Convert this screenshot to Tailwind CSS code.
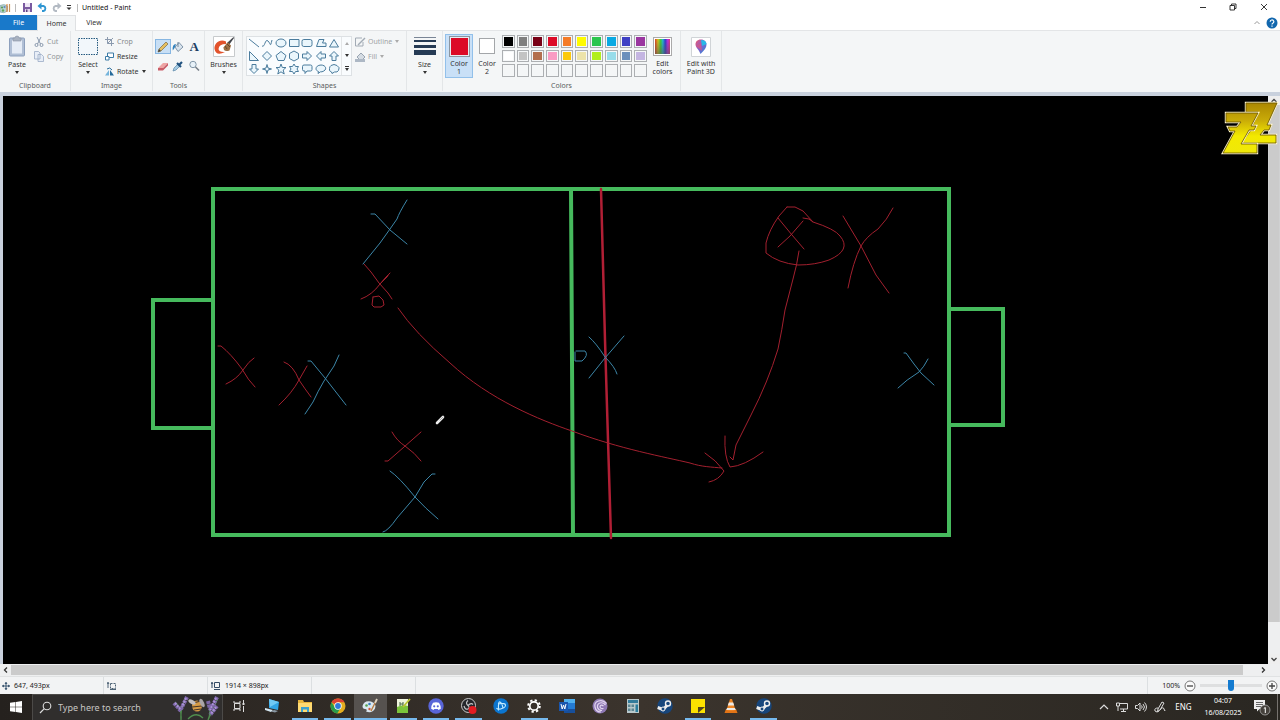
<!DOCTYPE html>
<html lang="en">
<head>
<meta charset="utf-8">
<title>Untitled - Paint</title>
<script src="https://cdn.jsdelivr.net/npm/@tailwindcss/browser@4"></script>
</head>
<body class="h-screen flex flex-col overflow-hidden bg-white text-[#333] text-[7px] leading-[10px] font-['Noto_Sans','Open_Sans',sans-serif]">

<!-- Title bar -->
<header class="h-[15px] shrink-0 flex items-center bg-white">
  <div class="flex items-center w-[82px] h-full">
    <svg class="w-3 h-3 shrink-0" viewBox="0 0 12 12"><path d="M0 3.500Q4 1.500 7.500 4v5Q4 12 0 10z" fill="#b9d3cf" stroke="#7a9ea6" stroke-width=".6"/><circle cx="2" cy="5.500" r="1.100" fill="#5a9a54"/><circle cx="4.500" cy="5" r="1.100" fill="#5d86c4"/><circle cx="3" cy="8.500" r="1.200" fill="#5fa65c"/><path d="M7 2v8" stroke="#d9772b" stroke-width="1"/><path d="M9.500 2v8" stroke="#c8955a" stroke-width="1.200"/></svg>
    <span class="ml-[3px] w-px h-2 bg-[#bbb]"></span>
    <button aria-label="Save" class="ml-[6px]"><svg class="w-[11px] h-[11px]" viewBox="0 0 11 11"><path d="M1 1h9v9H1z" fill="#7a5aa0"/><path d="M3 1h5v4H3z" fill="#eee6f5"/><path d="M3 7h5v3H3z" fill="#dfd3ea"/><path d="M4 7.500h1.500V10H4z" fill="#604583"/></svg></button>
    <button aria-label="Undo" class="ml-[4px]"><svg class="w-[11px] h-[11px]" viewBox="0 0 11 11" fill="none"><path d="M2 4h4.500a2.600 2.600 0 0 1 0 5H5" stroke="#2f96d2" stroke-width="1.900"/><path d="M.5 4l4-3.500v7z" fill="#2f96d2"/></svg></button>
    <button aria-label="Redo" class="ml-[3px]"><svg class="w-[11px] h-[11px]" viewBox="0 0 11 11" fill="none"><path d="M9 4H4.500a2.600 2.600 0 0 0 0 5H6" stroke="#b3bac3" stroke-width="1.900"/><path d="M10.500 4L6.500.5v7z" fill="#b3bac3"/></svg></button>
    <button aria-label="Customize toolbar" class="ml-[4px]"><svg class="w-[6px] h-[6px]" viewBox="0 0 6 6"><path d="M1 .5h4" stroke="#333"/><path d="M.5 2.500h5L3 5z" fill="#333"/></svg></button>
    <span class="ml-[5px] w-px h-2 bg-[#bbb]"></span>
  </div>
  <h1 class="text-[7px] text-[#111]">Untitled - Paint</h1>
  <div class="ml-auto flex h-full items-center pb-px">
    <button aria-label="Minimize" class="w-[30px] flex justify-center"><svg class="w-2 h-2" viewBox="0 0 8 8"><path d="M1 4.500h6" stroke="#333"/></svg></button>
    <button aria-label="Restore" class="w-[30px] flex justify-center"><svg class="w-2 h-2" viewBox="0 0 8 8" fill="none" stroke="#222" stroke-width=".9"><path d="M1 2.500h4.500v4.500H1zM2.500 2.500V1H7v4.500H5.500"/></svg></button>
    <button aria-label="Close" class="w-[32px] flex justify-center"><svg class="w-2 h-2" viewBox="0 0 8 8"><path d="M1 1l6 6M7 1L1 7" stroke="#222" stroke-width=".9"/></svg></button>
  </div>
</header>

<!-- Ribbon tabs -->
<nav class="h-4 shrink-0 flex items-stretch bg-white border-b border-[#e3e5e7]">
  <button class="w-[37px] bg-[#1979ca] text-white">File</button>
  <button class="w-[39px] bg-[#f4f6f7] border-x border-t border-[#dfe1e3] -mb-px">Home</button>
  <button class="w-[36px]">View</button>
  <div class="ml-auto flex items-center gap-[5px] pr-[2px]">
    <button aria-label="Collapse ribbon"><svg class="w-2 h-2" viewBox="0 0 8 8"><path d="M1.500 5L4 2.500 6.500 5" fill="none" stroke="#999"/></svg></button>
    <button aria-label="Help"><svg class="w-3 h-3" viewBox="0 0 12 12"><circle cx="6" cy="6" r="5.500" fill="#1267ae"/><path d="M4.200 4.700a1.800 1.700 0 1 1 2.600 1.500Q6 6.600 6 7.500M6 8.500v1.200" fill="none" stroke="#fff" stroke-width="1.200"/></svg></button>
  </div>
</nav>

<!-- Ribbon -->
<main class="flex-1 min-h-0 flex flex-col">
<div class="h-[61px] shrink-0 flex bg-[#f4f6f7] pb-px">
  <section class="w-[71px] flex flex-col border-r border-[#e3e6e8]">
    <div class="flex-1 flex pt-[3px]">
      <button class="w-[34px] flex flex-col items-center pt-px"><svg class="w-[18px] h-[22px]" viewBox="0 0 18 22"><rect x="1.500" y="3" width="15" height="18" rx="1" fill="#b0bfd5" stroke="#8da0bd"/><path d="M4 5h10v13.500H4z" fill="#e5ecf6"/><path d="M5 3h2q0-2 2-2t2 2h2v3H5z" fill="#a9b2c0" stroke="#8792a5" stroke-width=".6"/></svg><span class="mt-[3px]">Paste</span><svg class="w-1 h-[3px] mt-px" viewBox="0 0 4 3"><path d="M0 0h4L2 3z" fill="#333"/></svg></button>
      <div class="flex flex-col text-[#929699]">
        <button class="h-[15px] flex items-center gap-[3px]"><svg class="w-[10px] h-[10px]" viewBox="0 0 10 10" fill="none" stroke="#8998ad"><path d="M3 0l3.500 7M7 0L3.500 7"/><circle cx="2.500" cy="8" r="1.500"/><circle cx="7.500" cy="8" r="1.500"/></svg>Cut</button>
        <button class="h-[15px] flex items-center gap-[3px]"><svg class="w-[10px] h-[11px]" viewBox="0 0 10 11" fill="#e8eef7" stroke="#9aabc5" stroke-width=".8"><path d="M.5.5h4l1.500 1.500v6H.5zM4 3.500h3.500L9.500 5.500v5H4z"/></svg>Copy</button>
      </div>
    </div>
    <h2 class="text-center text-[7px] text-[#5a5d60]">Clipboard</h2>
  </section>
  <section class="w-[82px] flex flex-col border-r border-[#e3e6e8]">
    <div class="flex-1 flex pt-[3px]">
      <button class="w-[34px] flex flex-col items-center pt-px"><svg class="w-[22px] h-[22px]" viewBox="0 0 22 22"><rect x="1.500" y="3.500" width="19" height="16" fill="#f2f7fb" stroke="#23587e" stroke-dasharray="1.500 1"/></svg><span class="mt-[3px]">Select</span><svg class="w-1 h-[3px] mt-px" viewBox="0 0 4 3"><path d="M0 0h4L2 3z" fill="#333"/></svg></button>
      <div class="flex flex-col">
        <button class="h-[15px] flex items-center gap-[3px] text-[#85898c]"><svg class="w-[9px] h-[9px]" viewBox="0 0 9 9" fill="none" stroke="#8b9aae"><path d="M2.500 0v6.500H9M0 2.500h6.500V9M2.500 6.500L8 1"/></svg>Crop</button>
        <button class="h-[15px] flex items-center gap-[3px]"><svg class="w-[9px] h-[9px]" viewBox="0 0 9 9" fill="#fff" stroke="#3b7ba6"><path d="M2.500 1h6v4.500h-6z"/><path d="M.5 4.500H4v3.500H.5z"/></svg>Resize</button>
        <button class="h-[15px] flex items-center gap-[3px]"><svg class="w-[9px] h-[9px]" viewBox="0 0 9 9"><path d="M0 8.500h4V3z" fill="#74b4db"/><path d="M5 8.500h4L5 3z" fill="#256a9a"/><path d="M2 2q3-2.500 5 1" fill="none" stroke="#256a9a"/></svg>Rotate<svg class="w-1 h-[3px]" viewBox="0 0 4 3"><path d="M0 0h4L2 3z" fill="#333"/></svg></button>
      </div>
    </div>
    <h2 class="text-center text-[7px] text-[#5a5d60]">Image</h2>
  </section>
  <section class="w-[52px] flex flex-col border-r border-[#e3e6e8]">
    <div class="flex-1 grid grid-cols-3 content-start gap-y-[4px] px-[2px] pt-[8px] justify-items-center">
      <button aria-label="Pencil" class="w-4 h-[15px] flex items-center justify-center bg-[#c8dff5] border border-[#86b6e2]"><svg class="w-3 h-3" viewBox="0 0 12 12"><path d="M1 11l1-3 7-7 2 2-7 7z" fill="#e7bf5f" stroke="#7a6943" stroke-width=".7"/><path d="M1 11l1-3 2 2z" fill="#444"/></svg></button>
      <button aria-label="Fill with color" class="h-[15px] flex items-center"><svg class="w-3 h-3" viewBox="0 0 12 12"><path d="M3 6l4-4.500L11 6l-5 4.500z" fill="#d9e4ee" stroke="#647e96" stroke-width=".8"/><path d="M6 6V1" stroke="#55718b" stroke-width=".8"/><path d="M4 3Q0 3 .8 9.500q2-2 2.700-5z" fill="#3081bd"/></svg></button>
      <button aria-label="Text" class="h-[15px] text-[13px] leading-[15px] font-bold text-[#1d3e63] font-['Liberation_Serif',serif]">A</button>
      <button aria-label="Eraser" class="h-[15px] flex items-center"><svg class="w-3 h-3" viewBox="0 0 12 12"><path d="M1 8l5-5h5L6 8z" fill="#eea4a4"/><path d="M1 8h5v2.500H1zM6 8l5-5v2.500l-5 5z" fill="#c95d68"/></svg></button>
      <button aria-label="Color picker" class="h-[15px] flex items-center"><svg class="w-3 h-3" viewBox="0 0 12 12"><path d="M1 11l1-3 4-4 2 2-4 4z" fill="#a6cce4" stroke="#5a87a7" stroke-width=".7"/><path d="M5 3l4 4M7 5l3-3" stroke="#21527f" stroke-width="2.200"/></svg></button>
      <button aria-label="Magnifier" class="h-[15px] flex items-center"><svg class="w-3 h-3" viewBox="0 0 12 12"><circle cx="5" cy="4.500" r="3.200" fill="#e7f1f8" stroke="#8297a8"/><path d="M7.500 7L11 10.500" stroke="#777f88" stroke-width="1.600"/></svg></button>
    </div>
    <h2 class="text-center text-[7px] text-[#5a5d60]">Tools</h2>
  </section>
  <section class="w-[38px] flex flex-col border-r border-[#e3e6e8] pt-[5px]">
    <button class="flex flex-col items-center"><svg class="w-[22px] h-[21px]" viewBox="0 0 22 21"><path d="M.5.500h21v20H.5z" fill="#fff" stroke="#c7cacc"/><path d="M13 5.500C7 2.500 1 7 1.500 13q1.500 7.500 10.500 3-6 .5-6.500-3Q6 8 13 8z" fill="#e2532c"/><path d="M20.500 1l-6.500 6 2 2 5-7z" fill="#42464c"/><path d="M13.500 7.500l-3 4q0 5 6 3l1.500-5-3-3z" fill="#9c6e42"/><path d="M12 10l2 3M14 8l3 3" stroke="#674629"/></svg><span class="mt-[3px]">Brushes</span><svg class="w-1 h-[3px] mt-px" viewBox="0 0 4 3"><path d="M0 0h4L2 3z" fill="#333"/></svg></button>
  </section>
  <section class="w-[164px] flex flex-col border-r border-[#e3e6e8]">
    <div class="flex-1 flex pt-[3px] pl-[3px]">
      <div class="flex w-[106px] h-[40px] mt-[2px] bg-[#f9fcfe] border border-[#dde1e4]">
        <div class="w-[94px] grid grid-cols-7 grid-rows-3 place-items-center [&_svg]:w-[12px] [&_svg]:h-[12px] [&_svg]:fill-[#eaf6fc] [&_svg]:stroke-[#4b7c9d]">
          <button aria-label="Line"><svg viewBox="0 0 12 12"><path d="M1 2l10 8"/></svg></button>
          <button aria-label="Curve"><svg viewBox="0 0 12 12"><path fill="none" d="M1 9C4 11 4 1 7 4s2 7 4-1"/></svg></button>
          <button aria-label="Oval"><svg viewBox="0 0 12 12"><ellipse cx="6" cy="6" rx="5" ry="4"/></svg></button>
          <button aria-label="Rectangle"><svg viewBox="0 0 12 12"><path d="M1.500 2.500h9.500v7H1.500z"/></svg></button>
          <button aria-label="Rounded rectangle"><svg viewBox="0 0 12 12"><rect x="1" y="2.500" width="10" height="7" rx="1.800"/></svg></button>
          <button aria-label="Polygon"><svg viewBox="0 0 12 12"><path d="M1.500 9.500L4 2.500h5L7.500 6H11v3.500z"/></svg></button>
          <button aria-label="Triangle"><svg viewBox="0 0 12 12"><path d="M1.500 10L6 2.500 10.500 10z"/></svg></button>
          <button aria-label="Right triangle"><svg viewBox="0 0 12 12"><path d="M1.500 1.500v9h9z"/></svg></button>
          <button aria-label="Diamond"><svg viewBox="0 0 12 12"><path d="M6 1.500L10.500 6 6 10.500 1.500 6z"/></svg></button>
          <button aria-label="Pentagon"><svg viewBox="0 0 12 12"><path d="M6 1.500l5 4-2 5H3l-2-5z"/></svg></button>
          <button aria-label="Hexagon"><svg viewBox="0 0 12 12"><path d="M6 1l4.500 2.500v5L6 11 1.500 8.500v-5z"/></svg></button>
          <button aria-label="Right arrow"><svg viewBox="0 0 12 12"><path d="M1.500 4H6V1.500L10.500 6 6 10.500V8H1.500z"/></svg></button>
          <button aria-label="Left arrow"><svg viewBox="0 0 12 12"><path d="M10.500 4H6V1.500L1.500 6 6 10.500V8h4.500z"/></svg></button>
          <button aria-label="Up arrow"><svg viewBox="0 0 12 12"><path d="M4 10.500V6H1.500L6 1.500 10.500 6H8v4.500z"/></svg></button>
          <button aria-label="Down arrow"><svg viewBox="0 0 12 12"><path d="M4 1.500V6H1.500L6 10.500 10.500 6H8V1.500z"/></svg></button>
          <button aria-label="Four-point star"><svg viewBox="0 0 12 12"><path d="M6 1.500L7 5l3.500 1L7 7l-1 3.500L5 7 1.500 6 5 5z"/></svg></button>
          <button aria-label="Five-point star"><svg viewBox="0 0 12 12"><path d="M6 1l1.300 3.500H11L8.200 7l1 4L6 8.800 2.800 11l1-4L1 4.500h3.700z"/></svg></button>
          <button aria-label="Six-point star"><svg viewBox="0 0 12 12"><path d="M6 1l1.500 2.500h3L9 6l1.500 2.500h-3L6 11 4.500 8.500h-3L3 6 1.500 3.500h3z"/></svg></button>
          <button aria-label="Rounded callout"><svg viewBox="0 0 12 12"><path d="M3 2h6.500q1.500 0 1.500 1.500v3Q11 8 9.500 8H6l-2 2.500V8H3Q1.500 8 1.500 6.500v-3Q1.500 2 3 2z"/></svg></button>
          <button aria-label="Oval callout"><svg viewBox="0 0 12 12"><path d="M3.500 8.500C-1 7 1 2 6 2s7 5 1 6.800H5.500L3 10.500z"/></svg></button>
          <button aria-label="Cloud callout"><svg viewBox="0 0 12 12"><path d="M3 2.500q3-2 6 0 3.500 2 1.500 5-1 2-4 1.500L4 10.500 3.500 9Q.5 8 1.500 5.500q0-2 1.500-3z"/></svg></button>
        </div>
        <div class="flex-1 flex flex-col justify-around items-center border-l border-[#e3e6e8]">
          <button aria-label="Scroll up"><svg class="w-1 h-[3px]" viewBox="0 0 4 3"><path d="M0 3h4L2 0z" fill="#aaa"/></svg></button>
          <button aria-label="Scroll down"><svg class="w-1 h-[3px]" viewBox="0 0 4 3"><path d="M0 0h4L2 3z" fill="#333"/></svg></button>
          <button aria-label="More shapes"><svg class="w-1 h-[5px]" viewBox="0 0 4 5"><path d="M0 0h4v1H0zM0 2h4L2 5z" fill="#333"/></svg></button>
        </div>
      </div>
      <div class="flex flex-col pl-[3px] text-[#a0a3a6]">
        <button class="h-[15px] flex items-center gap-[2px]"><svg class="w-[11px] h-[10px]" viewBox="0 0 11 10" fill="none" stroke="#a2abb5"><path d="M7 1H.5v8H8V5"/><path d="M3 8l7-7" stroke-width="1.500"/></svg>Outline<svg class="w-1 h-[3px] ml-px" viewBox="0 0 4 3"><path d="M0 0h4L2 3z" fill="#aaa"/></svg></button>
        <button class="h-[15px] flex items-center gap-[2px]"><svg class="w-[11px] h-[10px]" viewBox="0 0 11 10"><path d="M2 5l4-4 4 4-4 4z" fill="#d5dce3" stroke="#99a5b2"/><path d="M0 7h10v3H0z" fill="#adb8c5"/></svg>Fill<svg class="w-1 h-[3px] ml-px" viewBox="0 0 4 3"><path d="M0 0h4L2 3z" fill="#aaa"/></svg></button>
      </div>
    </div>
    <h2 class="text-center text-[7px] text-[#5a5d60]">Shapes</h2>
  </section>
  <section class="w-[36px] flex flex-col border-r border-[#e3e6e8] pt-[5px]">
    <button class="flex flex-col items-center"><svg class="w-[22px] h-[21px]" viewBox="0 0 22 21" fill="#263b55"><path d="M0 1h22v1H0z" opacity=".6"/><path d="M0 4h22v2H0zM0 9h22v3H0zM0 14h22v5H0z"/></svg><span class="mt-[3px]">Size</span><svg class="w-1 h-[3px] mt-px" viewBox="0 0 4 3"><path d="M0 0h4L2 3z" fill="#333"/></svg></button>
  </section>
  <section class="w-[238px] flex flex-col border-r border-[#e3e6e8]">
    <div class="flex-1 flex pt-[3px] pl-[2px]">
      <button class="w-7 h-11 flex flex-col items-center bg-[#c9e0f7] border border-[#92c0ea] pt-px leading-[8px]"><span class="w-[21px] h-[21px] border border-[#8b96a1] bg-[#dc0a27] outline outline-1 -outline-offset-2 outline-[#e6ecf2]"></span><span class="mt-[3px]">Color<br>1</span></button>
      <button class="w-7 h-11 flex flex-col items-center pt-[4px] leading-[8px]"><span class="w-[16px] h-[16px] border border-[#a3a6a9] bg-white"></span><span class="mt-[6px]">Color<br>2</span></button>
      <div class="w-[147px] h-[44px] mt-px ml-px grid grid-cols-10 grid-rows-3 [&>button]:mr-[2px] [&>button]:mb-[2px] [&>button]:border [&>button]:border-[#acafb2] [&>button]:outline [&>button]:outline-1 [&>button]:-outline-offset-2 [&>button]:outline-[#f5f7f8]">
        <button aria-label="Black" class="bg-black"></button><button aria-label="Gray" class="bg-[#7f7f7f]"></button><button aria-label="Dark red" class="bg-[#780016]"></button><button aria-label="Red" class="bg-[#dc0a27]"></button><button aria-label="Orange" class="bg-[#f47b27]"></button><button aria-label="Yellow" class="bg-[#fffb00]"></button><button aria-label="Green" class="bg-[#2ac54d]"></button><button aria-label="Turquoise" class="bg-[#08a9e3]"></button><button aria-label="Indigo" class="bg-[#3e40c4]"></button><button aria-label="Purple" class="bg-[#9a36a0]"></button>
        <button aria-label="White" class="bg-white"></button><button aria-label="Light gray" class="bg-[#c3c3c3]"></button><button aria-label="Brown" class="bg-[#b36f4e]"></button><button aria-label="Rose" class="bg-[#f99bc3]"></button><button aria-label="Gold" class="bg-[#fcc90d]"></button><button aria-label="Light yellow" class="bg-[#ece3aa]"></button><button aria-label="Lime" class="bg-[#b1ee1e]"></button><button aria-label="Light turquoise" class="bg-[#98dcea]"></button><button aria-label="Blue-gray" class="bg-[#6b8fbc]"></button><button aria-label="Lavender" class="bg-[#c4b5e2]"></button>
        <button aria-label="Custom 1"></button><button aria-label="Custom 2"></button><button aria-label="Custom 3"></button><button aria-label="Custom 4"></button><button aria-label="Custom 5"></button><button aria-label="Custom 6"></button><button aria-label="Custom 7"></button><button aria-label="Custom 8"></button><button aria-label="Custom 9"></button><button aria-label="Custom 10"></button>
      </div>
      <button class="w-[27px] flex flex-col items-center pt-[3px] leading-[8px]"><span class="w-[19px] h-[19px] border border-[#aaa] bg-white p-px flex"><span class="flex-1 bg-[linear-gradient(90deg,#e03c22,#d5c51f_20%,#38cf39_38%,#24b8d7_52%,#293fd0_68%,#c22be0_85%,#e03575)]"><span class="block w-full h-full bg-linear-to-b from-transparent to-[#555]/60"></span></span></span><span class="mt-[4px]">Edit<br>colors</span></button>
    </div>
    <h2 class="text-center text-[7px] text-[#5a5d60]">Colors</h2>
  </section>
  <section class="w-[41px] flex flex-col border-r border-[#e3e6e8] pt-[6px]">
    <button class="flex flex-col items-center leading-[8px]"><svg class="w-5 h-5" viewBox="0 0 20 20"><defs><linearGradient id="drop" x1="0" y1="0" x2="1" y2="1"><stop offset="0" stop-color="#f25768"/><stop offset=".45" stop-color="#8960cc"/><stop offset="1" stop-color="#198fd9"/></linearGradient></defs><path d="M.5.500h19v19H.5z" fill="#fff" stroke="#d0d4d7"/><path d="M10 2.500c-4 0-5.500 2.500-5.500 5 0 3 3.500 5 5 9.500 4-4 6-6.500 6-9.500 0-2.500-2-5-5.500-5z" fill="url(#drop)"/><path d="M10 3q5 0 5.500 4L11 9z" fill="#26b9e8"/><path d="M5 9l5-3 1 8z" fill="#e2547b" opacity=".65"/></svg><span class="mt-[3px]">Edit with<br>Paint 3D</span></button>
  </section>
</div>
<div class="h-[4px] shrink-0 bg-[#c9d1dd]"></div>

<!-- Drawing area with scroll bars -->
<div class="relative flex-1 min-h-0 flex bg-[#c9d1dd] pl-[3px]">
  <svg class="flex-1 min-w-0 h-full bg-black" viewBox="3 96 1265 568" preserveAspectRatio="xMinYMin meet" fill="none" stroke-linecap="round" stroke-linejoin="round" role="img" aria-label="Football pitch tactics drawing">
    <g stroke="#46ba5d" stroke-width="4" stroke-linecap="butt" stroke-linejoin="miter">
      <path d="M213 189H949V535H213zM571 189L572 360 573 535M213 300H153V428H213M949 309H1003V425H949"/>
    </g>
    <path d="M601 189L605 340 608 440 611 538" stroke="#b11f35" stroke-width="2.500"/>
    <g stroke="#a3202f" stroke-width="1">
      <path d="M364 264L371 272 379 283 388 293 392 299M361 299Q372 295 380 284L390 273M380 284L387 277 388 275 381 283M373 297L379 296 383 300 384 305 381 307H374L372 305 373 297"/>
      <path d="M218 346H221Q231 354 242 369 248 380 255 387M226 384Q237 379 243 370 249 361 254 358"/>
      <path d="M284 362Q293 365 299 380 305 389 311 397M307 366L299 380Q292 393 279 405"/>
      <path d="M392 432Q397 441 405 446 415 453 421 461M421 432L404 447 388 461H385"/>
      <path d="M398 308Q415 333 450 363C490 400 540 420 572 431 620 449 665 457 690 463 702 467 712 467 722 468M705 453Q716 460 724 471 719 480 709 482"/>
      <path d="M778 218L792 235 804 249M803 221L790 236 778 247M787 207H795L803 211 813 222 809 219 803 218M813 222Q835 229 840 236 852 250 829 260 815 265 798 265 778 263 766 253V243Q769 230 779 216L787 207M799 251Q797 265 793 279L785 310Q782 330 778 349 768 382 751 415L736 445 733 460 730 457M725 436Q724 457 730 467 744 466 763 452"/>
      <path d="M843 216L861 246 876 275 889 293M893 208Q887 220 878 229 866 237 861 246 853 262 848 288"/>
    </g>
    <g stroke="#3c86a8" stroke-width="1">
      <path d="M371 214H375L390 230 407 244M407 200Q399 213 397 219L390 229 380 243 363 264"/>
      <path d="M308 361H311L325 378 346 405M339 355L334 366 324 381Q318 391 313 402L305 414"/>
      <path d="M390 471Q399 477 415 497 425 508 438 519M435 474H432L424 482 415 497 397 518Q388 531 383 532"/>
      <path d="M589 337Q596 343 605 357 615 367 617 374M624 336L605 358 589 378M575 352V361H582Q589 355 585 351H576"/>
      <path d="M904 353H906L914 364 921 373 934 385M928 359Q924 367 919 372 906 380 898 388"/>
    </g>
    <path d="M437 423L443 417" stroke="#eee" stroke-width="2.600"/><path d="M440 420L443 417" stroke="#777" stroke-width=".6"/>
  </svg>
  <div class="w-[12px] bg-[#d0d1d2] flex flex-col">
    <button aria-label="Scroll up" class="h-[9px] flex items-center justify-center bg-[#eee]"><svg class="w-2 h-2" viewBox="0 0 8 8"><path d="M1.500 5L4 2.500 6.500 5" fill="none" stroke="#444" stroke-width="1.300"/></svg></button>
    <div class="flex-1 mx-px bg-[#cbcbcb]"></div>
    <div class="h-[32px] bg-[#eeeff0]"></div>
    <button aria-label="Scroll down" class="h-[10px] flex items-center justify-center bg-[#eee]"><svg class="w-2 h-2" viewBox="0 0 8 8"><path d="M1.500 3L4 5.500 6.500 3" fill="none" stroke="#444" stroke-width="1.300"/></svg></button>
  </div>
  <!-- Channel logo -->
  <svg class="absolute top-[5px] right-[1px] w-[58px] h-[54px]" viewBox="0 0 58 54" aria-label="ZZ logo" role="img">
    <defs><linearGradient id="gold" x1="0" y1="0" x2="0" y2="54" gradientUnits="userSpaceOnUse"><stop offset="0" stop-color="#a98400"/><stop offset=".35" stop-color="#c8aa08"/><stop offset=".65" stop-color="#f3e900"/><stop offset="1" stop-color="#efe80a"/></linearGradient></defs>
    <g fill="url(#gold)">
      <path d="M25 2H56L46 24H50L48 29H43L39 34H55V42H20L31 28H26V24H32L37 11H25z" stroke="#fff5c9" stroke-width="2.400"/><path d="M25 2H56L46 24H50L48 29H43L39 34H55V42H20L31 28H26V24H32L37 11H25z" stroke="#655200" stroke-width=".8"/>
      <path d="M5 12H37L30 25H35L33 29H28L20 43H36V52H2L14 30H9L7 26H16L20 21H5z" stroke="#fff5c9" stroke-width="2.400"/><path d="M5 12H37L30 25H35L33 29H28L20 43H36V52H2L14 30H9L7 26H16L20 21H5z" stroke="#655200" stroke-width=".8"/>
    </g>
  </svg>
</div>
<div class="h-[12px] shrink-0 flex bg-[#eeeff0]">
  <button aria-label="Scroll left" class="w-[11px] flex items-center justify-center"><svg class="w-2 h-2" viewBox="0 0 8 8"><path d="M5 1.500L2.500 4 5 6.500" fill="none" stroke="#333" stroke-width="1.300"/></svg></button>
  <div class="flex-1 my-px bg-[#cbcbcb]"></div>
  <div class="w-[14px]"></div>
  <button aria-label="Scroll right" class="w-[11px] flex items-center justify-center"><svg class="w-2 h-2" viewBox="0 0 8 8"><path d="M3 1.500L5.500 4 3 6.500" fill="none" stroke="#333" stroke-width="1.300"/></svg></button>
  <div class="w-[12px]"></div>
</div>
</main>

<!-- Status bar -->
<div class="h-[18px] shrink-0 flex items-center bg-[#f2f3f4] text-[#222] border-t border-[#e0e2e3]">
  <div class="w-[104px] h-full flex items-center gap-[4px] pl-[2px] border-r border-[#dcdfe1]"><svg class="w-2 h-2" viewBox="0 0 8 8"><path d="M4 0v8M0 4h8" stroke="#3d5873"/><path d="M4 0L2.500 2h3zM4 8L2.500 6h3zM0 4l2-1.500v3zM8 4L6 2.500v3z" fill="#3d5873"/></svg>647, 493px</div>
  <div class="w-[104px] h-full flex items-center pl-[3px] border-r border-[#dcdfe1]"><svg class="w-[10px] h-2" viewBox="0 0 10 8" fill="none" stroke="#4c6174"><path d="M1 0v6M0 2l1-1.500L2 2"/><path d="M3.500 1.500h5v5h-5z" stroke-dasharray="2 1"/><path d="M3 7.500h6"/></svg></div>
  <div class="w-[104px] h-full flex items-center gap-[4px] pl-[3px] border-r border-[#dcdfe1]"><svg class="w-[10px] h-2" viewBox="0 0 10 8" fill="none" stroke="#334b66"><path d="M1 0v6M0 2l1-1.500L2 2"/><path d="M3.500.500h5v5h-5zM3 7.500h6"/></svg>1914 × 898px</div>
  <div class="w-[104px] h-full border-r border-[#dcdfe1]"></div>
  <div class="ml-auto h-full flex items-center gap-[4px] pl-[14px] pr-[2px] border-l border-[#dcdfe1]">
    <label for="zoom">100%</label>
    <button aria-label="Zoom out"><svg class="w-3 h-3" viewBox="0 0 12 12"><circle cx="6" cy="6" r="5" fill="#fafafa" stroke="#777"/><path d="M3 6h6" stroke="#444" stroke-width="1.300"/></svg></button>
    <input id="zoom" type="range" min="0" max="100" value="50" class="w-[62px] h-3 appearance-none bg-transparent [&::-webkit-slider-runnable-track]:h-[3px] [&::-webkit-slider-runnable-track]:bg-[#dedfe0] [&::-webkit-slider-thumb]:appearance-none [&::-webkit-slider-thumb]:w-[6px] [&::-webkit-slider-thumb]:h-[11px] [&::-webkit-slider-thumb]:-mt-1 [&::-webkit-slider-thumb]:bg-[#147bd0] [&::-webkit-slider-thumb]:rounded-b-sm">
    <button aria-label="Zoom in"><svg class="w-3 h-3" viewBox="0 0 12 12"><circle cx="6" cy="6" r="5" fill="#fafafa" stroke="#777"/><path d="M3 6h6M6 3v6" stroke="#444" stroke-width="1.300"/></svg></button>
  </div>
</div>

<!-- Taskbar -->
<footer class="h-[26px] shrink-0 flex items-stretch bg-linear-to-r from-[#25211e] via-[#3b342d] to-[#2a2722] text-white">
  <button aria-label="Start" class="w-8 flex items-center justify-center"><svg class="w-3 h-3" viewBox="0 0 12 12" fill="#fff"><path d="M0 1.700L5.500 1v4.700H0zM6 .9L12 0v5.700H6zM0 6.200h5.500V11L0 10.300zM6 6.200h6V12l-6-.9z"/></svg></button>
  <label class="w-[191px] flex items-center bg-[#302e2d] border border-[#4c4a48] border-b-0 pl-[6px]">
    <svg class="w-[13px] h-[13px] shrink-0" viewBox="0 0 13 13"><circle cx="8" cy="5" r="3.800" fill="none" stroke="#ddd" stroke-width="1.100"/><path d="M5.300 7.700L1 12" stroke="#ddd" stroke-width="1.200"/></svg>
    <input type="text" placeholder="Type here to search" aria-label="Type here to search" class="ml-[6px] w-[114px] bg-transparent text-[9px] leading-3 placeholder:text-[#c7c5c3] outline-none">
    <svg class="w-[48px] h-[25px] shrink-0" viewBox="0 0 48 25"><path d="M3 7q7 6 6 18M14 2Q8 14 9 25M46 3q-5 11-10 22M37 10q2 9-1 15M16 24q8-8 15-1" stroke="#4f8d4e" stroke-width="1.300" fill="none"/><path d="M2 8l7 8M15 2l-6 12M45 2l-7 14M36 6l2 8M45 11l-7 9" stroke="#7d66a8" stroke-width="4" stroke-dasharray="3 .7"/><path d="M3 8l6 7M14 3l-4 9M44 3l-6 12M44 12l-5 7" stroke="#a990d6" stroke-width="2" stroke-dasharray="2 1"/><ellipse cx="25" cy="11" rx="5" ry="5.500" fill="#d69a45"/><path d="M21 8l8-2M20 12l10-1M22 15l7-1" stroke="#47372b" stroke-width="1.200"/><ellipse cx="20" cy="7" rx="4" ry="2" transform="rotate(30 20 7)" fill="#c4bfc0"/><ellipse cx="30" cy="8" rx="4.500" ry="2" transform="rotate(65 30 8)" fill="#aaa5a8"/></svg>
  </label>
  <div class="w-[557px] grid grid-cols-17 [&>button]:flex [&>button]:items-center [&>button]:justify-center [&>button]:border-b-2 [&_svg]:w-4 [&_svg]:h-4">
    <button aria-label="Task view" class="mx-[3px] border-transparent"><svg viewBox="0 0 16 16" fill="none" stroke="#ddd"><path d="M3 3v2h6V3M3 13v-2h6v2M3.500 5.500h5.500v5H3.500zM12.500 2v3M12.500 8v6"/><path d="M11.500 6h2" stroke-width="2"/></svg></button>
    <button aria-label="Remote PC" class="mx-[3px] border-transparent"><svg viewBox="0 0 16 16"><path d="M5 1l10 3-1 8-9-2z" fill="#32a5e5"/><path d="M5 1l10 3-9 5z" fill="#70caf5"/><path d="M1 10l8 2-2 2-6-2z" fill="#d4e6f0"/><path d="M10 12l4 1-3 1.500-4-1z" fill="#8b99a4"/></svg></button>
    <button aria-label="File Explorer" class="mx-[3px] border-[#76b9ed]"><svg viewBox="0 0 16 16"><path d="M1 2h5l1 2h8v10H1z" fill="#e9b63e"/><path d="M1 5h14v9H1z" fill="#ffda72"/><path d="M4 14V9h8v5h-2v-2.500H6V14z" fill="#3da1cf"/></svg></button>
    <button aria-label="Chrome" class="mx-[3px] border-[#76b9ed]"><svg viewBox="0 0 16 16"><circle cx="8" cy="8" r="7.500" fill="#e3ad20"/><path d="M8 8L1.500 4.250A7.500 7.500 0 0 1 14.500 4.250H8z" fill="#dd4334"/><path d="M1.500 4.250A7.500 7.500 0 0 0 7.200 15.460L10.500 10 5 9.500z" fill="#299b4b"/><circle cx="8" cy="8" r="3.700" fill="#fff"/><circle cx="8" cy="8" r="2.900" fill="#317bd9"/></svg></button>
    <button aria-label="Paint" class="border-[#76b9ed] bg-[#56524f]"><svg viewBox="0 0 16 16"><path d="M.5 8Q2 2 9 3.500q6 2 4 7-3 5.500-9 3 2-2-1-2.500Q.5 11 .5 8z" fill="#dbe7ef"/><circle cx="4.500" cy="7.500" r="1.300" fill="#54a34f"/><circle cx="7.500" cy="6" r="1.300" fill="#347dbd"/><circle cx="7.500" cy="11" r="1.200" fill="#d2553c"/><path d="M14.500 2L9 13" stroke="#b77e43" stroke-width="1.400"/><path d="M15 1l-2 4" stroke="#ded3c0" stroke-width="1.800"/></svg></button>
    <button aria-label="Notepad++" class="mx-[3px] border-[#76b9ed]"><svg viewBox="0 0 16 16"><path d="M2 1h11v14H2z" fill="#eff5dd"/><path d="M2 9q6-3 11-1v7H2z" fill="#7bc43b"/><path d="M5 4v4M5 6h3M8 4v4" stroke="#456543"/><path d="M15 1L8 9" stroke="#b9c531" stroke-width="1.800"/></svg></button>
    <button aria-label="Discord" class="mx-[3px] border-[#76b9ed]"><svg viewBox="0 0 16 16"><circle cx="8" cy="8" r="7.700" fill="#5965d8"/><path d="M5 4.700q3-1 6 0 2 3 1.800 6L10.500 12l-.8-1H6.300l-.8 1-2.300-1.300Q3 7.700 5 4.700z" fill="#fff"/><circle cx="6.200" cy="8.300" r="1.100" fill="#5965d8"/><circle cx="9.800" cy="8.300" r="1.100" fill="#5965d8"/></svg></button>
    <button aria-label="OBS Studio" class="mx-[3px] border-[#76b9ed]"><svg viewBox="0 0 16 16"><circle cx="7.500" cy="7.500" r="7" fill="#25272b" stroke="#ccc" stroke-width="1"/><path d="M7 2.500q-3 2.500 0 5 3-3 5-1M3 8q1 4 4 3 2-1 .5-3" stroke="#c5c6c8" stroke-width="1.200" fill="none"/><circle cx="11.500" cy="12" r="4" fill="#e31c21"/></svg></button>
    <button aria-label="Battle.net" class="mx-[3px] border-transparent"><svg viewBox="0 0 16 16"><circle cx="8" cy="8" r="7.700" fill="#0b75cf"/><path d="M5.500 12.500Q5 3 7 4t3 6Q5 12.500 3.500 10M5 6q8-1.500 7.500 1.500T6 11" stroke="#c5ecff" stroke-width="1.100" fill="none"/></svg></button>
    <button aria-label="Settings" class="mx-[3px] border-[#76b9ed]"><svg viewBox="0 0 16 16"><circle cx="8" cy="8" r="5.800" stroke="#fff" stroke-width="2" stroke-dasharray="2.270 2.280" fill="none"/><circle cx="8" cy="8" r="4.200" stroke="#fff" stroke-width="1.700" fill="none"/></svg></button>
    <button aria-label="Word" class="mx-[3px] border-transparent"><svg viewBox="0 0 16 16"><path d="M5 1h11v14H5z" fill="#247bd3"/><path d="M5 1h11v4H5z" fill="#50b0ee"/><path d="M5 11h11v4H5z" fill="#174f9b"/><path d="M0 4h9v9H0z" fill="#1956ae"/><path d="M2 6l1.200 5L4.500 7l1.300 4L7 6" stroke="#fff" fill="none"/></svg></button>
    <button aria-label="BitTorrent" class="mx-[3px] border-transparent"><svg viewBox="0 0 16 16"><circle cx="8" cy="8" r="7.500" fill="#8e78b3"/><path d="M14.500 5.500Q11 1.500 6.500 3T3 9q1 5 6 5M13.500 7Q11 4 8 5T5.500 9.500q1 3 4.500 3M11.500 8Q9 6 8 8.500q0 2.500 3.500 2" stroke="#e2d6f0" stroke-width="1.200" fill="none"/></svg></button>
    <button aria-label="Calculator" class="mx-[3px] border-transparent"><svg viewBox="0 0 16 16"><path d="M2 1h12v14H2z" fill="#b8c8cb"/><path d="M3 2h10v3H3z" fill="#327b9b"/><path d="M3 6.500h2.500V9H3zM6.500 6.500H9V9H6.500zM3 10.500h2.500V13H3zM6.500 10.500H9V13H6.500z" fill="#5b8592"/><path d="M10.500 6.500H13V14h-2.500z" fill="#297c9c"/></svg></button>
    <button aria-label="Steam" class="mx-[3px] border-transparent"><svg viewBox="0 0 16 16"><circle cx="8" cy="8" r="7.700" fill="#17467c"/><path d="M.7 9.500L6 11.500l5-5" stroke="#eee" stroke-width="3" fill="none"/><circle cx="11" cy="5.500" r="2.500" fill="#17467c" stroke="#eee" stroke-width="1.400"/><circle cx="6" cy="11" r="2" fill="#17467c" stroke="#eee"/></svg></button>
    <button aria-label="Sticky Notes" class="mx-[3px] border-[#76b9ed]"><svg viewBox="0 0 16 16"><path d="M1 1h14v14H1z" fill="#fce100"/><path d="M8 15V9h7z" fill="#51451d"/></svg></button>
    <button aria-label="VLC" class="mx-[3px] border-transparent"><svg viewBox="0 0 16 16"><path d="M3 11h10l1.500 4h-13z" fill="#e27416"/><path d="M7 1h2l3.500 11q-4.500 2-9 0z" fill="#ef8525"/><path d="M5.800 4.500h4.400l1 3H4.800zM4 10h8l.7 2H3.300z" fill="#ecebe8"/></svg></button>
    <button aria-label="Steam game" class="mx-[3px] border-[#76b9ed]"><svg viewBox="0 0 16 16"><circle cx="8" cy="8" r="7.700" fill="#17467c"/><path d="M.7 9.500L6 11.500l5-5" stroke="#eee" stroke-width="3" fill="none"/><circle cx="11" cy="5.500" r="2.500" fill="#17467c" stroke="#eee" stroke-width="1.400"/><circle cx="6" cy="11" r="2" fill="#17467c" stroke="#eee"/></svg></button>
  </div>
  <div class="ml-auto flex items-center text-[7px] leading-[12px]">
    <div class="flex items-center gap-[7px]">
      <button aria-label="Show hidden icons"><svg class="w-[10px] h-[10px]" viewBox="0 0 10 10"><path d="M1 7l4-4 4 4" fill="none" stroke="#ddd" stroke-width="1.200"/></svg></button>
      <button aria-label="Network"><svg class="w-[12px] h-[10px]" viewBox="0 0 12 10" fill="none" stroke="#ddd"><path d="M3 1.500h8.500v5.500H4M7.500 7v2.500M5 9.500h5M.5 1h3v3h-3zM2 4v5"/></svg></button>
      <button aria-label="Volume"><svg class="w-[12px] h-[10px]" viewBox="0 0 12 10" fill="none" stroke="#ddd"><path d="M.5 3.500h2L5 1v8L2.500 6.500h-2zM6.500 3.500q1.500 1.500 0 3M8 2q3 3 0 6M9.500.500q4 4.500 0 9"/></svg></button>
      <button aria-label="Pen input"><svg class="w-[12px] h-[12px]" viewBox="0 0 12 12" fill="none" stroke="#ddd"><path d="M8 1L4 8l-.5 2.500L6 9l4-7zM4 7Q0 7 1 10q2 2 4 0M6 9q3-4 4-1t1 1"/></svg></button>
    </div>
    <button class="w-[35px] text-center text-[8px]">ENG</button>
    <button class="w-[44px] text-center">04:07<br>16/08/2025</button>
    <button aria-label="Notifications, 1 new" class="ml-[8px] mr-[6px]"><svg class="w-[18px] h-[18px]" viewBox="0 0 18 18"><path d="M1 2h11v9H6.500L4 13.500V11H1z" fill="#eee"/><path d="M3 4.500h7M3 6.500h7M3 8.500h5" stroke="#444" stroke-width=".8"/><circle cx="12" cy="12" r="5" fill="#44403b" stroke="#aaa" stroke-width=".8"/><path d="M10.800 10.500l1.500-1V15" stroke="#fff" fill="none"/></svg></button>
    <span class="w-px h-full bg-[#77736f] mr-[2px]"></span>
  </div>
</footer>
</body>
</html>
